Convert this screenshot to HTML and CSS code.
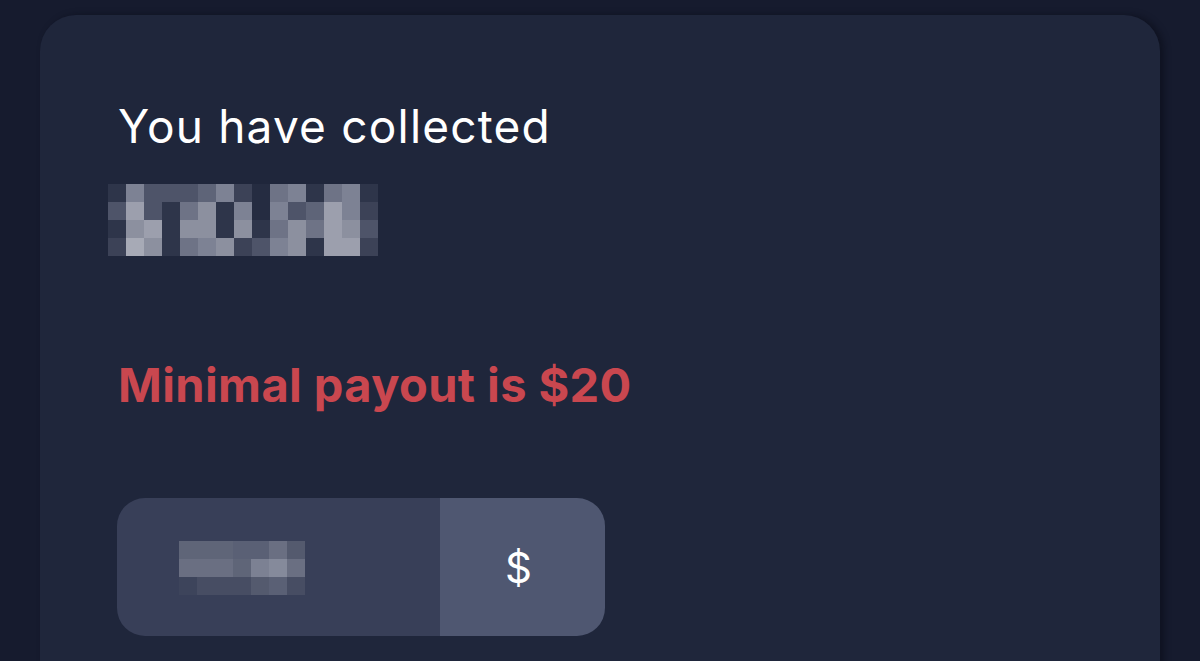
FILE: index.html
```html
<!DOCTYPE html>
<html lang="en">
<head>
    <meta charset="UTF-8">
    <meta name="viewport" content="width=device-width, initial-scale=1.0">
    <title>Payout</title>
    <link rel="stylesheet" href="styles.css">
</head>
<body>
    <div class="card">
        <h2 class="label">You have collected</h2>

        <!-- amount is hidden behind a mosaic -->
        <div class="mosaic amount">
            <span class="d1"></span><span class="d6"></span><span class="d3"></span><span class="d3"></span><span class="d3"></span><span class="d4"></span><span class="d6"></span><span class="d2"></span><span class="d0"></span><span class="d5"></span><span class="d6"></span><span class="d1"></span><span class="d5"></span><span class="d6"></span><span class="d1"></span>
            <span class="d3"></span><span class="d8"></span><span class="d3"></span><span class="d1"></span><span class="d5"></span><span class="d7"></span><span class="d1"></span><span class="d6"></span><span class="d0"></span><span class="d6"></span><span class="d3"></span><span class="d4"></span><span class="d8"></span><span class="d6"></span><span class="d2"></span>
            <span class="d1"></span><span class="d7"></span><span class="d8"></span><span class="d1"></span><span class="d7"></span><span class="d7"></span><span class="d1"></span><span class="d7"></span><span class="d1"></span><span class="d5"></span><span class="d7"></span><span class="d5"></span><span class="d8"></span><span class="d7"></span><span class="d3"></span>
            <span class="d2"></span><span class="d9"></span><span class="d7"></span><span class="d1"></span><span class="d5"></span><span class="d6"></span><span class="d7"></span><span class="d2"></span><span class="d3"></span><span class="d6"></span><span class="d7"></span><span class="d1"></span><span class="d8"></span><span class="d8"></span><span class="d2"></span>
        </div>

        <p class="warning">Minimal payout is $20</p>

        <div class="field">
            <div class="field-value">
                <div class="mosaic small">
                    <span class="i4"></span><span class="i4"></span><span class="i4"></span><span class="i3"></span><span class="i3"></span><span class="i5"></span><span class="i2"></span>
                    <span class="i5"></span><span class="i5"></span><span class="i5"></span><span class="i4"></span><span class="i6"></span><span class="i7"></span><span class="i5"></span>
                    <span class="i0"></span><span class="i1"></span><span class="i1"></span><span class="i1"></span><span class="i2"></span><span class="i3"></span><span class="i1"></span>
                </div>
            </div>
            <div class="field-unit">$</div>
        </div>
    </div>
</body>
</html>
```

FILE: styles.css
```css
body {
    margin: 0;
    height: 661px;
    overflow: hidden;
    background-color: #161b2e;
    font-family: "Inter", "Liberation Sans", sans-serif;
}

.card {
    margin: 15px 40px 0;
    height: 720px;
    box-sizing: border-box;
    padding: 84px 78px 0;
    background-color: #1f263b;
    border-radius: 36px;
    box-shadow: 4px 0 6px rgba(8, 10, 20, 0.5);
}

.label {
    margin: 0;
    color: #ffffff;
    font-size: 46px;
    font-weight: 400;
    line-height: 54px;
    letter-spacing: 1.2px;
}

.mosaic {
    display: grid;
    grid-auto-rows: 18px;
}

.amount {
    grid-template-columns: repeat(15, 18px);
    margin: 31px 0 0 -10px;
}

.d0 { background: #252c41; }
.d1 { background: #2e354a; }
.d2 { background: #3c4257; }
.d3 { background: #4e5469; }
.d4 { background: #5e6478; }
.d5 { background: #6e7386; }
.d6 { background: #7d8294; }
.d7 { background: #8c909f; }
.d8 { background: #9c9fad; }
.d9 { background: #a7aab6; }

.warning {
    margin: 101px 0 0;
    color: #c9474f;
    font-size: 47px;
    font-weight: 700;
    line-height: 56px;
    letter-spacing: 0.4px;
}

.field {
    display: flex;
    width: 488px;
    height: 138px;
    margin: 85px 0 0 -1px;
    border-radius: 28px;
    overflow: hidden;
}

.field-value {
    flex: 1;
    display: flex;
    align-items: center;
    padding-left: 62px;
    background-color: #383f58;
}

.small {
    grid-template-columns: repeat(7, 18px);
    margin-top: 2px;
}

.i0 { background: #3d445b; }
.i1 { background: #474d63; }
.i2 { background: #545a6e; }
.i3 { background: #5a6075; }
.i4 { background: #5f6578; }
.i5 { background: #6a6f82; }
.i6 { background: #7c8193; }
.i7 { background: #858a9b; }

.field-unit {
    width: 165px;
    display: flex;
    align-items: center;
    justify-content: center;
    padding-right: 8px;
    box-sizing: border-box;
    background-color: #4f5771;
    color: #ffffff;
    font-size: 42px;
    font-weight: 400;
}
```
